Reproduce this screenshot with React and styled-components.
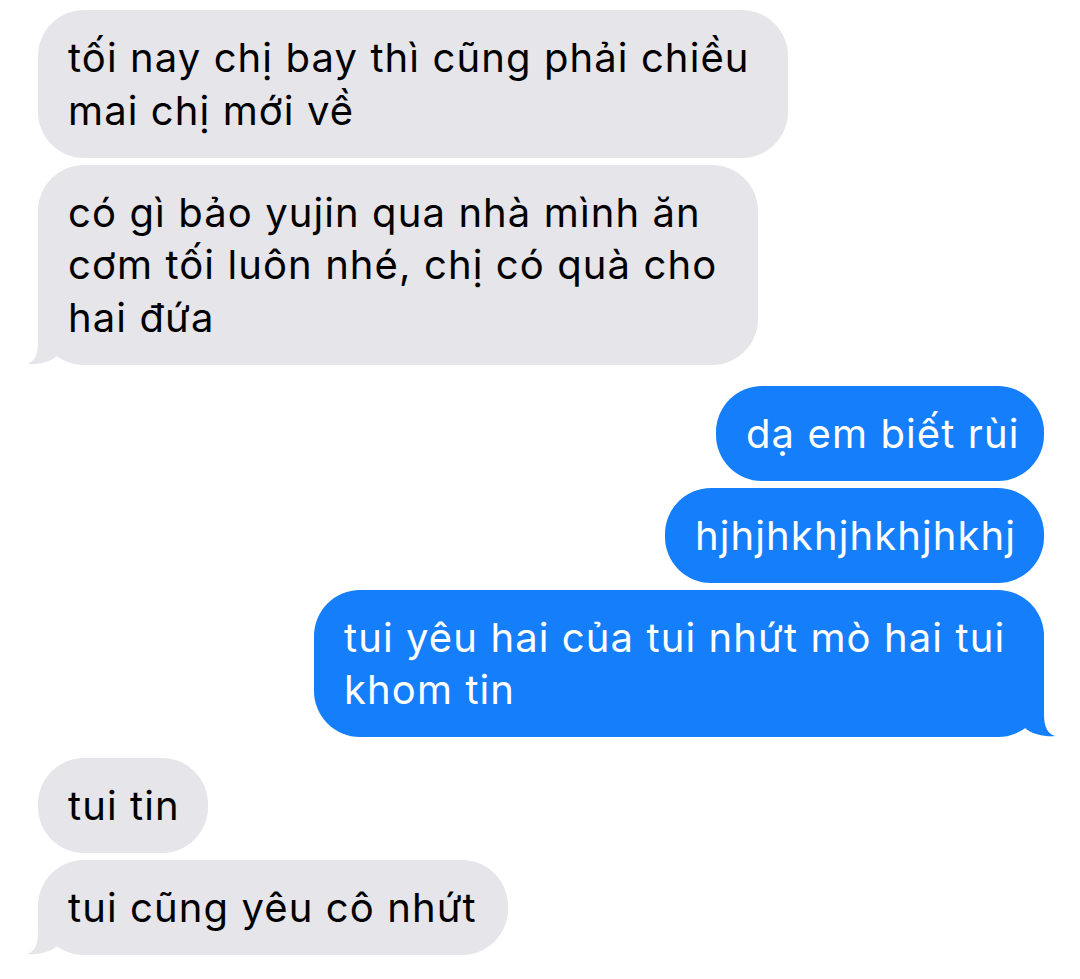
import styled, { createGlobalStyle } from "styled-components";

const GlobalStyle = createGlobalStyle`
  html, body {
    margin: 0;
    padding: 0;
    background: #ffffff;
  }
  body {
    font-family: Inter, "Noto Sans", "Liberation Sans", sans-serif;
    -webkit-font-smoothing: antialiased;
  }
`;

const messages = [
  {
    from: "them",
    items: [
      { text: "tối nay chị bay thì cũng phải chiều\nmai chị mới về", width: 750 },
      {
        text: "có gì bảo yujin qua nhà mình ăn\ncơm tối luôn nhé, chị có quà cho\nhai đứa",
        width: 720,
      },
    ],
  },
  {
    from: "me",
    items: [
      { text: "dạ em biết rùi", width: 328 },
      { text: "hjhjhkhjhkhjhkhj", width: 379 },
      { text: "tui yêu hai của tui nhứt mò hai tui\nkhom tin", width: 730 },
    ],
  },
  {
    from: "them",
    items: [
      { text: "tui tin", width: 170 },
      { text: "tui cũng yêu cô nhứt", width: 470 },
    ],
  },
];

const Tail = ({ side, color }) => (
  <TailSvg $side={side} viewBox="-48 -48 60 50" width="60" height="50">
    <path
      d="M -30 -48 L 0 -48 L 0 -22 C 0 -10 4 -3 11 -1 C 4 0 -12 -2 -19 -9 L -30 -9 Z"
      fill={color}
    />
  </TailSvg>
);

const App = () => {
  return (
    <>
      <GlobalStyle />
      <Thread>
        {messages.map((group, gi) => (
          <Group key={gi} $mine={group.from === "me"}>
            {group.items.map((msg, i) => {
              const last = i === group.items.length - 1;
              const mine = group.from === "me";
              return (
                <Bubble key={i} $mine={mine} $width={msg.width}>
                  {msg.text}
                  {last && (
                    <Tail
                      side={mine ? "right" : "left"}
                      color={mine ? "#147efb" : "#e5e5ea"}
                    />
                  )}
                </Bubble>
              );
            })}
          </Group>
        ))}
      </Thread>
    </>
  );
};

export default App;

const Thread = styled.div`
  display: flex;
  flex-direction: column;
  gap: 21px;
  padding: 10px 36px 0 38px;
  width: 1080px;
  box-sizing: border-box;
`;

const Group = styled.div`
  display: flex;
  flex-direction: column;
  gap: 7px;
  align-items: ${({ $mine }) => ($mine ? "flex-end" : "flex-start")};
`;

const Bubble = styled.div`
  position: relative;
  box-sizing: border-box;
  width: ${({ $width }) => $width}px;
  padding: 22px 0 20.5px 30px;
  border-radius: 46px;
  background: ${({ $mine }) => ($mine ? "#147efb" : "#e5e5ea")};
  color: ${({ $mine }) => ($mine ? "#ffffff" : "#000000")};
  font-size: 40px;
  letter-spacing: 1.1px;
  line-height: 52.5px;
  white-space: pre-line;
`;

const TailSvg = styled.svg`
  position: absolute;
  bottom: -2px;
  ${({ $side }) =>
    $side === "right"
      ? "right: -12px;"
      : "left: -12px; transform: scaleX(-1);"}
`;
